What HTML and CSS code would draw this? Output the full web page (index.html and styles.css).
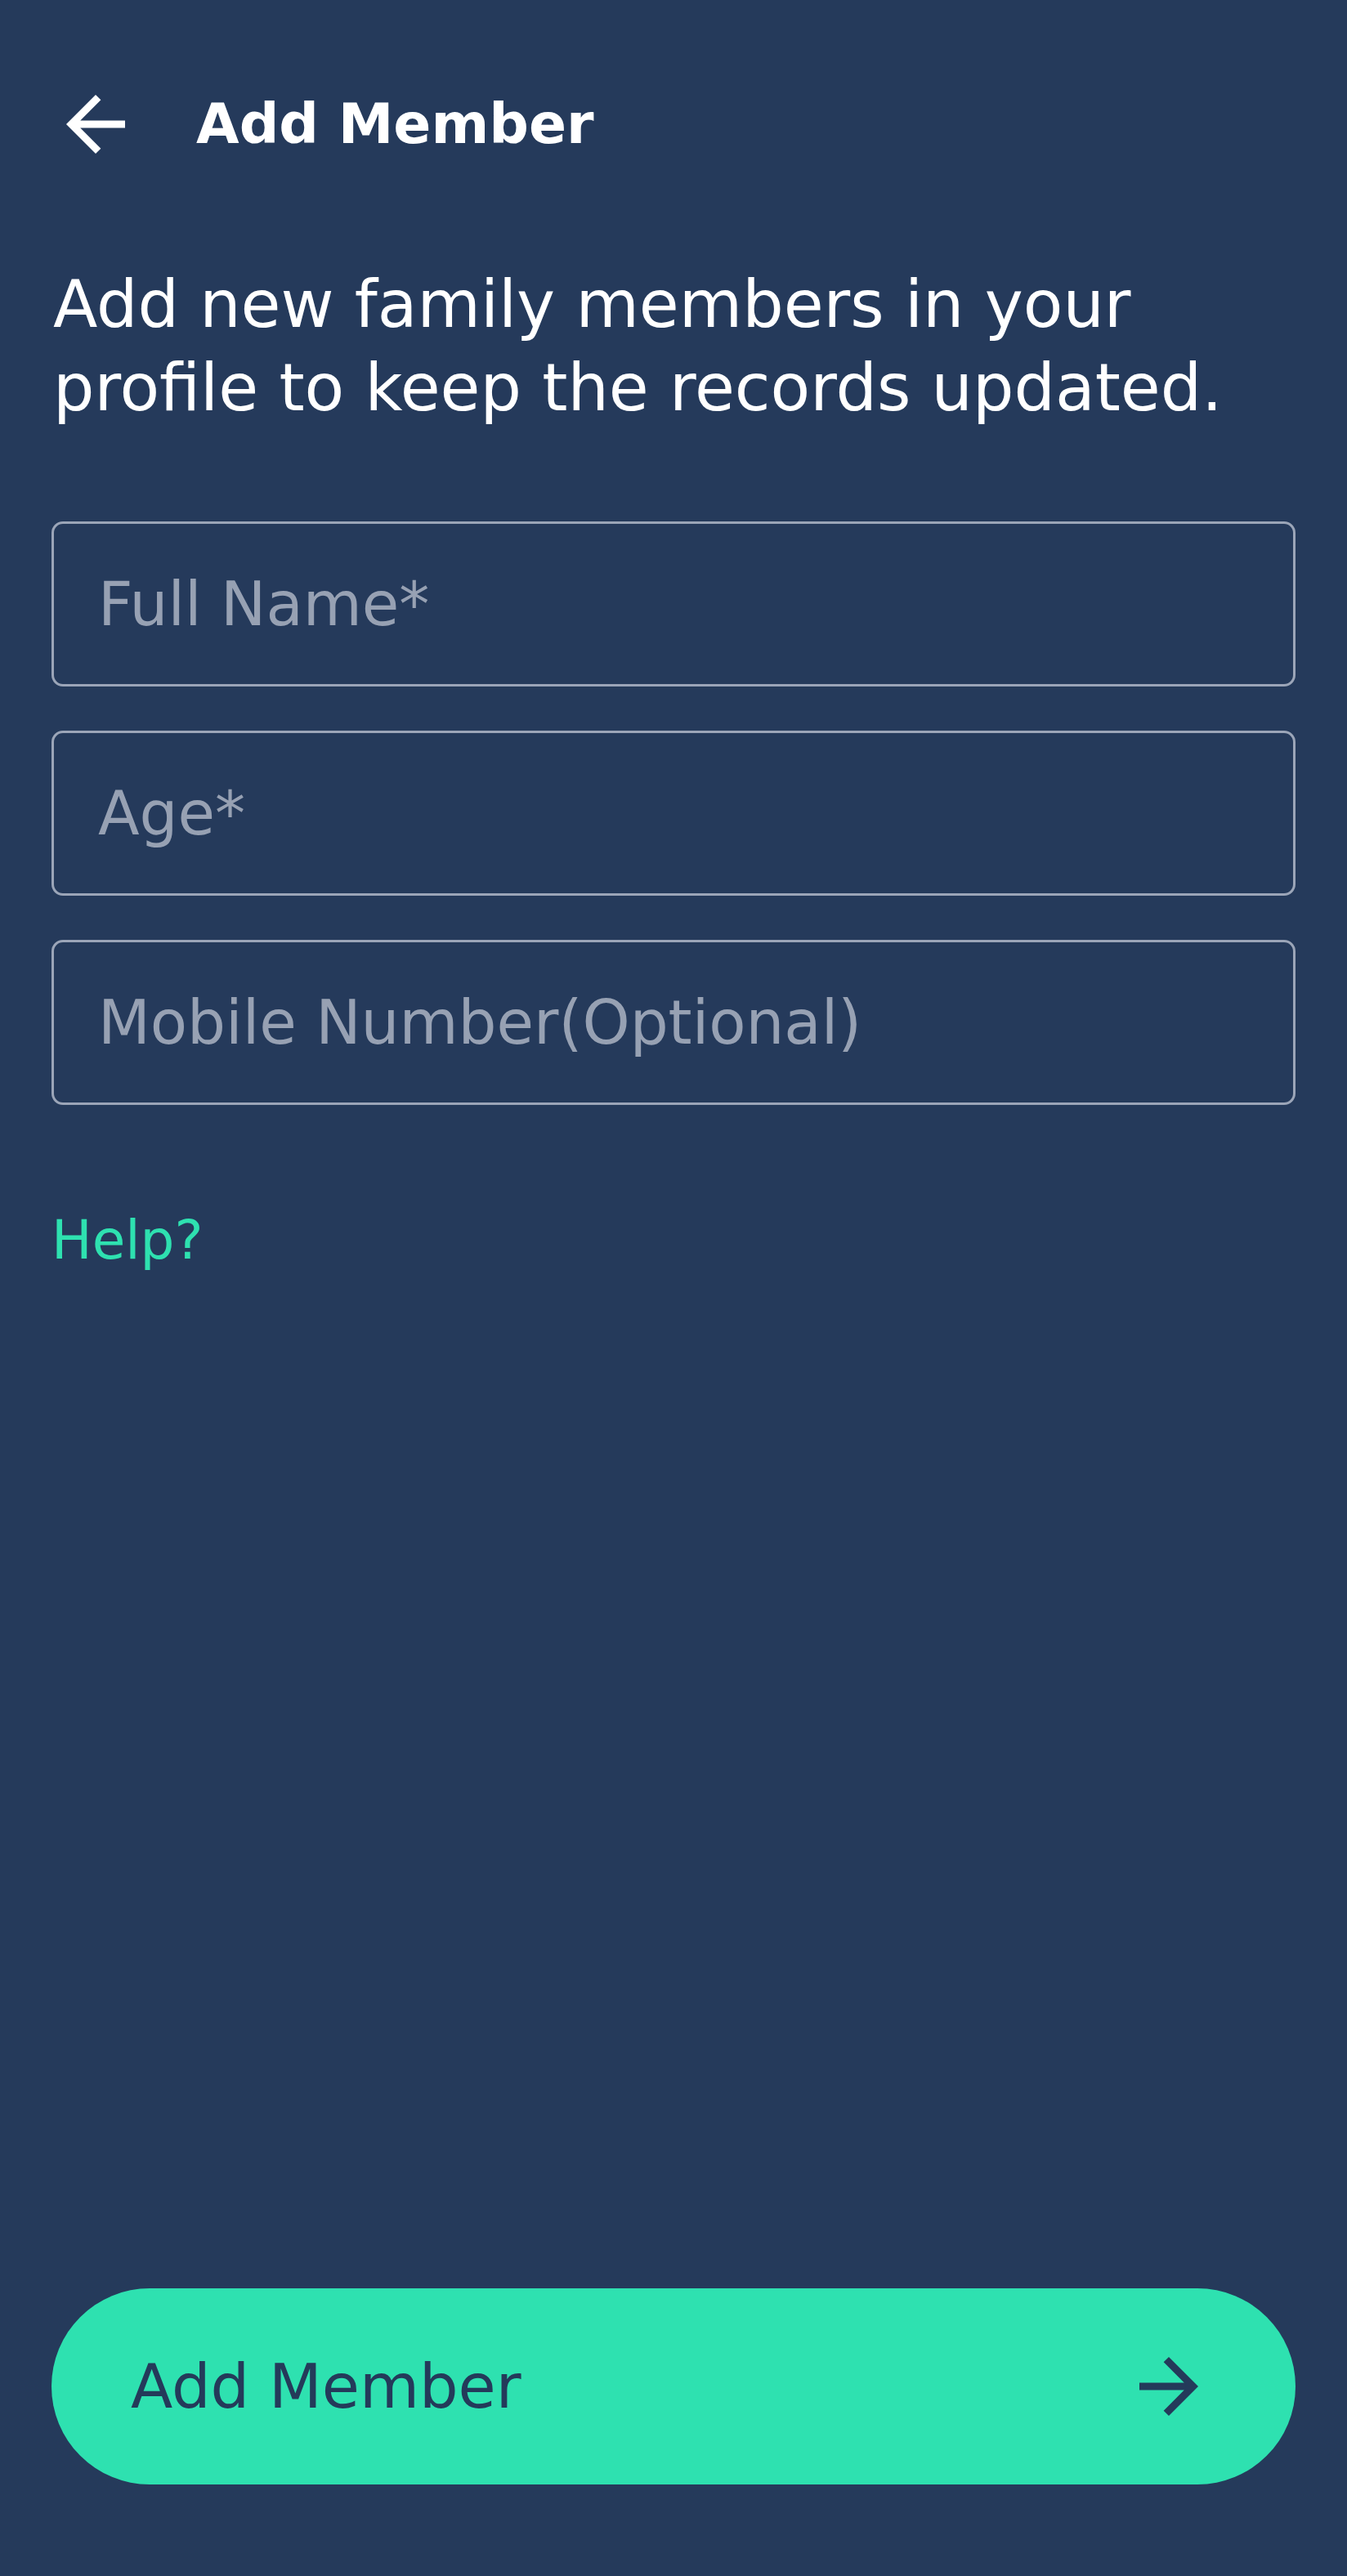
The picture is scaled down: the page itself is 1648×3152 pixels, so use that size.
FILE: index.html
```html
<!DOCTYPE html>
<html lang="en">
<head>
<meta charset="utf-8">
<title>Add Member</title>
<link rel="stylesheet" href="styles.css">
</head>
<body>
<div class="page">
  <header class="header">
    <svg class="icon-back" viewBox="0 0 24 24" aria-hidden="true"><path d="M20 11H7.83l5.59-5.59L12 4l-8 8 8 8 1.41-1.41L7.83 13H20v-2z"/></svg>
    <h1 class="title">Add Member</h1>
  </header>
  <p class="intro">Add new family members in your profile to keep the records updated.</p>
  <form class="fields">
    <input class="field" type="text" placeholder="Full Name*">
    <input class="field" type="text" placeholder="Age*">
    <input class="field" type="text" placeholder="Mobile Number(Optional)">
  </form>
  <a class="help" href="#">Help?</a>
  <button class="submit" type="button">
    <span class="submit-label">Add Member</span>
    <svg class="icon-forward" viewBox="0 0 24 24" aria-hidden="true"><path d="M12 4l-1.41 1.41L16.17 11H4v2h12.17l-5.58 5.59L12 20l8-8z"/></svg>
  </button>
</div>
</body>
</html>
```
FILE: styles.css
```css
html, body {
  margin: 0;
  padding: 0;
  background: #253a5b;
}
body {
  font-family: "DejaVu Sans", "Liberation Sans", sans-serif;
  color: #ffffff;
}
.page {
  box-sizing: border-box;
  min-height: 3152px;
  padding: 98px 63px 112px;
  display: flex;
  flex-direction: column;
}
.header {
  display: flex;
  align-items: center;
  height: 108px;
  gap: 69px;
}
.icon-back {
  width: 108px;
  height: 108px;
  fill: #ffffff;
  flex: none;
}
.title {
  margin: 0;
  font-size: 68px;
  font-weight: 700;
  line-height: 108px;
  color: #ffffff;
}
.intro {
  margin: 116px 0 0 2px;
  font-size: 79.5px;
  line-height: 102px;
  font-weight: 400;
  color: #ffffff;
}
.fields {
  margin: 112px 0 0;
  display: flex;
  flex-direction: column;
  gap: 54px;
}
.field {
  box-sizing: border-box;
  display: block;
  width: 100%;
  height: 202px;
  margin: 0;
  padding: 0 0 0 54px;
  border: 3.5px solid #9ba5b8;
  border-radius: 14px;
  background: transparent;
  font-family: "DejaVu Sans", "Liberation Sans", sans-serif;
  font-size: 74px;
  color: #ffffff;
  outline: none;
}
.field::placeholder {
  color: #97a1b3;
  opacity: 1;
}
.help {
  align-self: flex-start;
  margin-top: 128px;
  font-size: 66px;
  line-height: 76px;
  color: #2ee1b0;
  text-decoration: none;
}
.submit {
  margin-top: auto;
  box-sizing: border-box;
  height: 240px;
  width: 100%;
  border: none;
  border-radius: 120px;
  background: #2ee1b0;
  display: flex;
  align-items: center;
  justify-content: space-between;
  padding: 0 101px 0 97px;
  font-family: "DejaVu Sans", "Liberation Sans", sans-serif;
  cursor: pointer;
}
.submit-label {
  font-size: 75px;
  font-weight: 400;
  color: #243a5a;
}
.icon-forward {
  width: 108px;
  height: 108px;
  fill: #243a5a;
  flex: none;
}
```
